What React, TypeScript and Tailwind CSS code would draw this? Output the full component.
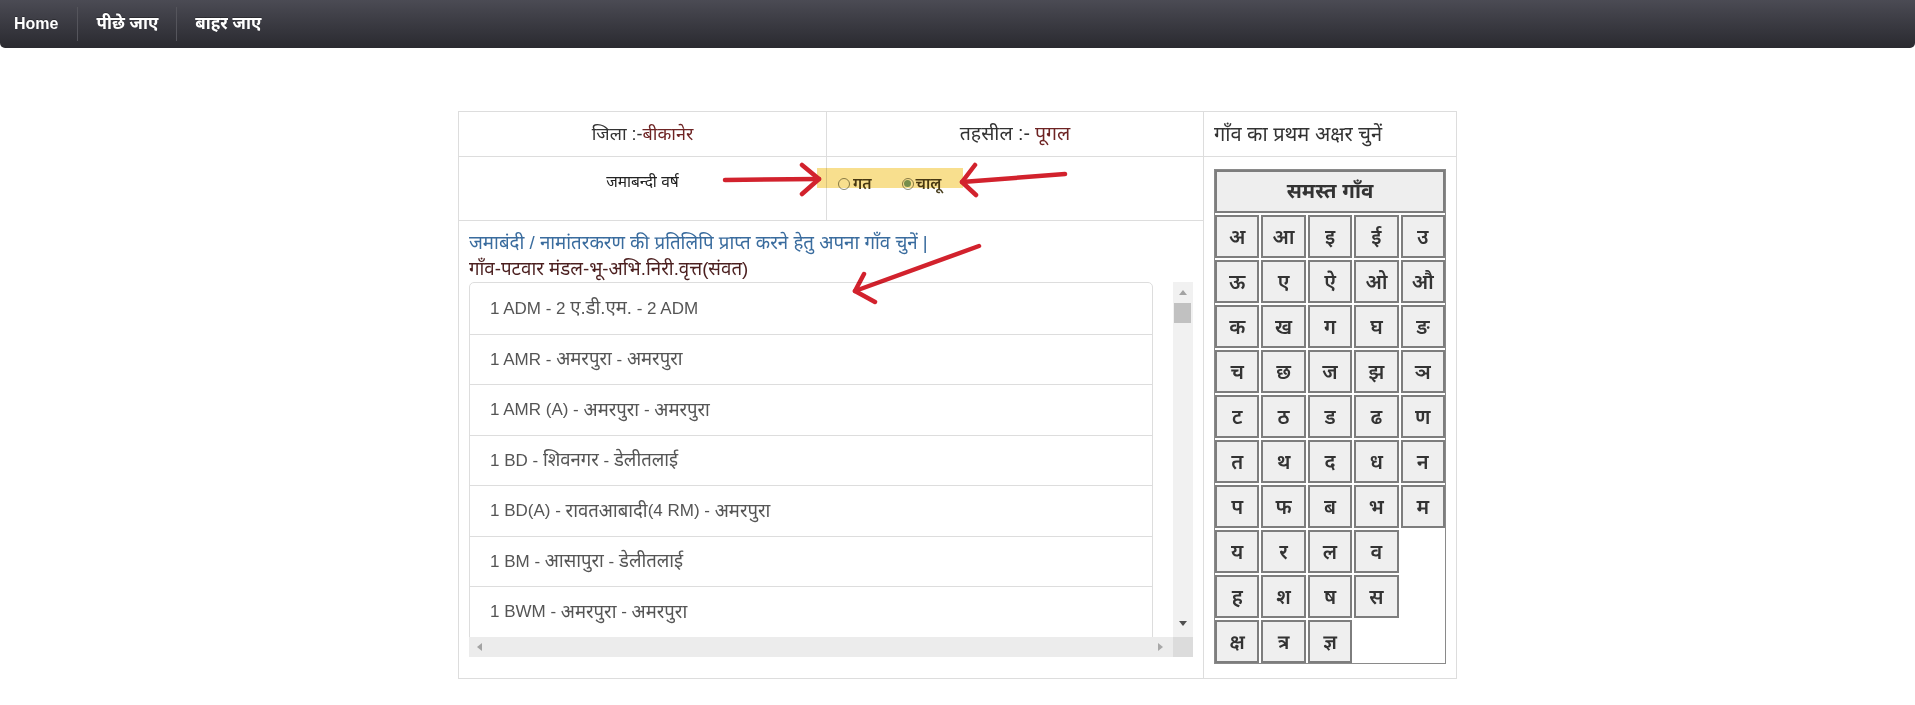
import React from 'react';

const FONT = "font-['Liberation_Sans','Noto_Sans_Devanagari','Noto_Sans',sans-serif]";

const LETTER_ROWS: string[][] = [
  ['अ', 'आ', 'इ', 'ई', 'उ'],
  ['ऊ', 'ए', 'ऐ', 'ओ', 'औ'],
  ['क', 'ख', 'ग', 'घ', 'ङ'],
  ['च', 'छ', 'ज', 'झ', 'ञ'],
  ['ट', 'ठ', 'ड', 'ढ', 'ण'],
  ['त', 'थ', 'द', 'ध', 'न'],
  ['प', 'फ', 'ब', 'भ', 'म'],
  ['य', 'र', 'ल', 'व'],
  ['ह', 'श', 'ष', 'स'],
  ['क्ष', 'त्र', 'ज्ञ'],
];

const VILLAGES = [
  '1 ADM - 2 ए.डी.एम. - 2 ADM',
  '1 AMR - अमरपुरा - अमरपुरा',
  '1 AMR (A) - अमरपुरा - अमरपुरा',
  '1 BD - शिवनगर - डेलीतलाई',
  '1 BD(A) - रावतआबादी(4 RM) - अमरपुरा',
  '1 BM - आसापुरा - डेलीतलाई',
  '1 BWM - अमरपुरा - अमरपुरा',
];

// devanagari glyphs of the fallback font run small next to latin, bump them a bit
const Mixed: React.FC<{ text: string }> = ({ text }) => (
  <>
    {text.split(/([\u0900-\u097F][\u0900-\u097F.]*)/g).map((part, i) =>
      /[\u0900-\u097F]/.test(part) ? (
        <span key={i} className="text-[18.5px]">
          {part}
        </span>
      ) : (
        <span key={i}>{part}</span>
      ),
    )}
  </>
);

const NavBar: React.FC = () => (
  <nav className="flex h-[48px] items-stretch rounded-b-[5px] bg-linear-to-b from-[#4b4b54] to-[#2a2a30] text-[16px] font-bold text-white [text-shadow:0_-1px_0_rgba(0,0,0,0.3)]">
    <a className="flex items-center pl-[14px] pr-[19px]">Home</a>
    <span className="my-[7px] w-px bg-[#55555c]" />
    <a className="flex items-center px-[18px] text-[17px]">पीछे जाए</a>
    <span className="my-[7px] w-px bg-[#55555c]" />
    <a className="flex items-center px-[18px] text-[17px]">बाहर जाए</a>
  </nav>
);

const Radio: React.FC<{ checked?: boolean }> = ({ checked }) => (
  <span className="flex h-[12px] w-[12px] items-center justify-center rounded-full border border-[#8c8c78]">
    {checked && <span className="h-[7px] w-[7px] rounded-full bg-[#7aa386]" />}
  </span>
);

const LetterPicker: React.FC = () => (
  <div className="flex w-[232px] flex-col gap-[2px] border border-[#8a8a8a] text-[#333]">
    <div className="flex h-[43px] items-center justify-center border-2 border-[#7d7d7d] bg-[#eeeeee] text-[20.5px] font-bold">
      समस्त गाँव
    </div>
    {LETTER_ROWS.map((row, i) => (
      <div key={i} className="grid grid-cols-5 gap-[2px]">
        {row.map((l) => (
          <button
            key={l}
            className="flex h-[43px] items-center justify-center border-2 border-[#7d7d7d] bg-[#efefef] text-[20px] font-semibold text-[#333]"
          >
            {l}
          </button>
        ))}
      </div>
    ))}
  </div>
);

const VillageList: React.FC = () => (
  <div className="flex w-[724px] flex-col">
    <div className="flex h-[355px]">
      <div className="w-[704px] overflow-hidden">
        <ul className="w-[684px] rounded-t-[5px] border border-[#dddddd] text-[17px] text-[#555]">
          {VILLAGES.map((v, i) => (
            <li
              key={v}
              className={`flex h-[50.5px] items-center whitespace-pre pl-[20px] ${i > 0 ? 'border-t border-[#dddddd]' : ''}`}
            >
              <Mixed text={v} />
            </li>
          ))}
        </ul>
      </div>
      {/* vertical scrollbar */}
      <div className="relative w-[20px] bg-[#f1f1f1]">
        <span className="absolute left-[6px] top-[8px] h-0 w-0 border-x-[4px] border-b-[5px] border-x-transparent border-b-[#a3a3a3]" />
        <span className="absolute left-[1px] top-[21px] h-[20px] w-[17px] bg-[#c1c1c1]" />
        <span className="absolute bottom-[11px] left-[6px] h-0 w-0 border-x-[4px] border-t-[5px] border-x-transparent border-t-[#505050]" />
      </div>
    </div>
    {/* horizontal scrollbar */}
    <div className="flex h-[20px]">
      <div className="relative w-[704px] bg-[#ececec]">
        <span className="absolute left-[8px] top-[6px] h-0 w-0 border-y-[4px] border-r-[5px] border-y-transparent border-r-[#a3a3a3]" />
        <span className="absolute right-[10px] top-[6px] h-0 w-0 border-y-[4px] border-l-[5px] border-y-transparent border-l-[#a8a8a8]" />
      </div>
      <div className="w-[20px] bg-[#dcdcdc]" />
    </div>
  </div>
);

const Annotations: React.FC = () => (
  <svg
    className="pointer-events-none absolute left-0 top-0 mix-blend-multiply"
    width="999"
    height="568"
    viewBox="0 0 999 568"
  >
    <rect x="358" y="56" width="146" height="20" fill="#f8df8e" />
    <g stroke="#d2222d" strokeWidth="4.5" strokeLinecap="round" strokeLinejoin="round" fill="none">
      <path d="M266 68 L360 67" />
      <path d="M343 53 L360 67 L343 82" />
      <path d="M606 62 L503 70" />
      <path d="M516 53 L503 70 L517 83" />
      <path d="M520 134 L396 179" />
      <path d="M405 162 L396 179 L416 190" />
    </g>
  </svg>
);

export default function App() {
  return (
    <div className={`min-h-screen bg-white ${FONT} text-[#333]`}>
      <NavBar />
      <div className="relative mx-auto mt-[63px] w-[999px] border border-[#dddddd]">
        <div className="grid grid-cols-[368px_377px_1fr] grid-rows-[45px_64px_457px]">
          <div className="flex items-center justify-center border-b border-r border-[#dddddd] text-[18px]">
            जिला :-<span className="text-[#6e2424]">बीकानेर</span>
          </div>
          <div className="flex items-center justify-center border-b border-r border-[#dddddd] text-[19.5px]">
            तहसील :- <span className="ml-[5px] text-[#6e2424]">पूगल</span>
          </div>
          <div className="flex items-center border-b border-[#dddddd] pl-[10px] text-[20px]">
            गाँव का प्रथम अक्षर चुनें
          </div>

          <div className="flex justify-center border-b border-r border-[#dddddd] pt-[13px] text-[15.5px] text-[#222]">
            जमाबन्दी वर्ष
          </div>
          <div className="flex items-start border-b border-r border-[#dddddd] pl-[11px] pt-[15px] text-[15.5px] font-semibold text-[#4a4020]">
            <label className="flex items-center">
              <Radio />
              <span className="ml-[3px]">गत</span>
            </label>
            <label className="ml-[30px] flex items-center">
              <Radio checked />
              <span className="ml-[2px]">चालू</span>
            </label>
          </div>
          <div className="row-span-2 pl-[10px] pt-[12px]">
            <LetterPicker />
          </div>

          <div className="col-span-2 border-r border-[#dddddd] pl-[10px] pt-[9px]">
            <p className="text-[18.7px] leading-[26px] text-[#3a6c9e]">
              जमाबंदी / नामांतरकरण की प्रतिलिपि प्राप्त करने हेतु अपना गाँव चुनें |
            </p>
            <p className="text-[18.7px] leading-[26px] text-[#4b1f1f]">
              गाँव-पटवार मंडल-भू-अभि.निरी.वृत्त(संवत)
            </p>
            <VillageList />
          </div>
        </div>
        <Annotations />
      </div>
    </div>
  );
}
